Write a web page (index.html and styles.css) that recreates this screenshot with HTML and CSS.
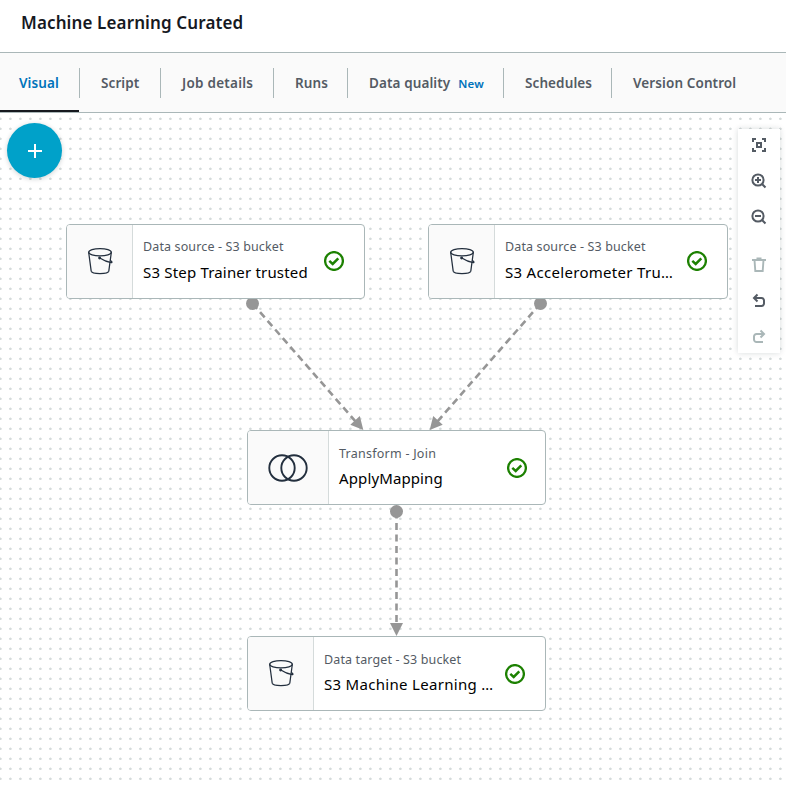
FILE: index.html
```html
<!DOCTYPE html>
<html lang="en">
<head>
<meta charset="utf-8">
<title>Machine Learning Curated</title>
<link rel="stylesheet" href="styles.css">
</head>
<body>
<svg class="defs" width="0" height="0">
  <symbol id="bucket" viewBox="0 0 28 30">
    <g fill="none" stroke="#232f3e" stroke-width="1.25" stroke-linejoin="round" stroke-linecap="round">
      <ellipse cx="13" cy="5.2" rx="11.3" ry="3.7"/>
      <path d="M1.700 5.500 4.200 24.200c.3 1.600 3.800 2.500 8.800 2.500s8.500-.9 8.800-2.500l2.500-18.700"/>
      <path d="M12.800 11.100c3 2 7.500 4 11.400 4.500 1.300 0 .8-1-.5-1.900"/>
      <circle cx="12.600" cy="11" r=".8" fill="#232f3e"/>
    </g>
  </symbol>
  <symbol id="check" viewBox="0 0 20 20">
    <circle cx="10" cy="10" r="8.900" fill="none" stroke="#1d8102" stroke-width="2.300"/>
    <path d="m5.300 9.800 3.400 3.100 5.600-5.600" fill="none" stroke="#1d8102" stroke-width="2.500"/>
  </symbol>
</svg>
<header class="header"><h1>Machine Learning Curated</h1></header>
<nav class="tabs">
  <a class="tab tab-visual active"><span>Visual</span></a>
  <a class="tab tab-script"><span>Script</span></a>
  <a class="tab tab-details"><span>Job details</span></a>
  <a class="tab tab-runs"><span>Runs</span></a>
  <a class="tab tab-quality"><span>Data quality</span><small>New</small></a>
  <a class="tab tab-schedules"><span>Schedules</span></a>
  <a class="tab tab-version"><span>Version Control</span></a>
</nav>
<main class="canvas">
  <svg class="edges" width="786" height="672" viewBox="0 113 786 672">
    <g fill="none" stroke="#969696" stroke-width="2.600" stroke-dasharray="7 4.500">
      <path d="M252.500 303.500 356 422"/>
      <path d="M540.500 303.500 437 422"/>
      <path d="M396.500 511.500V625"/>
    </g>
    <g fill="#969696">
      <circle cx="252.500" cy="303.500" r="6.500"/>
      <circle cx="540.500" cy="303.500" r="6.500"/>
      <circle cx="396.500" cy="511.500" r="6.500"/>
      <path d="M363.300 430 350.300 424.800 359.800 416z"/>
      <path d="M429.700 430 442.700 424.800 433.200 416z"/>
      <path d="M396.500 636 390 623h13z"/>
    </g>
  </svg>
  <section class="node trainer">
    <div class="node-icon"><svg width="28" height="30"><use href="#bucket"/></svg></div>
    <div class="node-text"><p class="kind">Data source - S3 bucket</p><p class="name">S3 Step Trainer trusted</p></div>
    <svg class="status" width="20" height="20"><use href="#check"/></svg>
  </section>
  <section class="node accelerometer">
    <div class="node-icon"><svg width="28" height="30"><use href="#bucket"/></svg></div>
    <div class="node-text"><p class="kind">Data source - S3 bucket</p><p class="name">S3 Accelerometer Tru…</p></div>
    <svg class="status" width="20" height="20"><use href="#check"/></svg>
  </section>
  <section class="node mapping">
    <div class="node-icon"><svg width="40" height="28" fill="none" stroke="#232f3e" stroke-width="1.900"><circle cx="14" cy="14" r="12.700"/><circle cx="26" cy="14" r="12.700"/></svg></div>
    <div class="node-text"><p class="kind">Transform - Join</p><p class="name">ApplyMapping</p></div>
    <svg class="status" width="20" height="20"><use href="#check"/></svg>
  </section>
  <section class="node target">
    <div class="node-icon"><svg width="28" height="30"><use href="#bucket"/></svg></div>
    <div class="node-text"><p class="kind">Data target - S3 bucket</p><p class="name">S3 Machine Learning …</p></div>
    <svg class="status" width="20" height="20"><use href="#check"/></svg>
  </section>
  <button class="add" aria-label="Add node"><svg width="14" height="14" stroke="#fff" stroke-width="2"><path d="M7 0v14M0 7h14"/></svg></button>
  <aside class="tools">
    <svg width="16" height="16"><path d="M2 5V2h3M11 2h3v3M14 11v3h-3M5 14H2v-3"/><path d="M6 6h4v4H6z"/></svg>
    <svg width="16" height="16"><circle cx="7" cy="7" r="5.600"/><path d="m11 11 3.500 3.500M4 7h6M7 4v6"/></svg>
    <svg width="16" height="16"><circle cx="7" cy="7" r="5.600"/><path d="m11 11 3.500 3.500M4 7h6"/></svg>
    <svg class="off trash" width="16" height="16"><path d="M1 3h14M5.500 1.500h5M3.500 3l.8 11h7.400l.8-11" stroke-width="1.900"/></svg>
    <svg width="16" height="16"><path d="M6.500 1.500 3 5l3.500 3.500M3 5h7.500a2.500 2.500 0 0 1 2.500 2.500v3a2.500 2.500 0 0 1-2.500 2.500H4"/></svg>
    <svg class="off" width="16" height="16"><path d="M9.500 1.500 13 5 9.500 8.500M13 5H5.500A2.500 2.500 0 0 0 3 7.500v3A2.500 2.500 0 0 0 5.500 13H12"/></svg>
  </aside>
</main>
</body>
</html>
```
FILE: styles.css
```css
* { box-sizing: border-box; }
body { margin: 0; width: 786px; height: 785px; overflow: hidden; background: #fff; font-family: "Noto Sans", sans-serif; color: #16191f; }
.defs { position: absolute; }
.header { height: 53px; border-bottom: 1px solid #aab7b8; padding: 10px 21px; }
h1 { margin: 0; font-size: 17px; line-height: 26px; font-weight: 600; letter-spacing: .12px; white-space: nowrap; }
.tabs { display: flex; height: 60px; background: #fafafa; border-bottom: 1px solid #aab7b8; }
.tab { position: relative; display: flex; align-items: center; padding-left: 21px; height: 59px; color: #545b64; font-size: 13.5px; font-weight: 600; letter-spacing: .1px; white-space: nowrap; }
.tab + .tab { background: linear-gradient(#aab7b8, #aab7b8) 0 15px / 1px 30px no-repeat; padding-left: 22px; }
.tab small { color: #0073bb; font-size: 11.5px; margin-left: 8px; padding-top: 1px; }
.tab-visual { width: 79px; padding-left: 19px; }
.active { color: #0073bb; border-bottom: 2px solid #16191f; padding-top: 2px; }
.tab-script { width: 81px; }
.tab-details { width: 113px; letter-spacing: .25px; }
.tab-runs { width: 74px; }
.tab-quality { width: 156px; }
.tab-schedules { width: 108px; }
.tab-version { width: 175px; }
.canvas { position: relative; height: 672px; background: radial-gradient(circle at 5.4px 5.8px, #d5dbdb 0.9px, transparent 1.6px) 5px 0 / 10px 10px; }
.edges { position: absolute; left: 0; top: 0; }
.node { position: absolute; display: flex; align-items: center; width: 299px; height: 75px; background: #fff; border: 1px solid #aab7b8; border-radius: 4px; overflow: hidden; }
.trainer { left: 66px; top: 111px; }
.accelerometer { left: 428px; top: 111px; width: 300px; }
.mapping { left: 247px; top: 317px; }
.target { left: 247px; top: 523px; }
.node-icon { flex: none; width: 66px; height: 100%; background: #fafafa; border-right: 1px solid #d5dbdb; display: flex; align-items: center; justify-content: center; padding-left: 2px; }
.mapping .node-icon { width: 81px; padding-left: 0; }
.node-text { flex: 1; padding-left: 10px; margin-top: -3px; white-space: nowrap; }
.node p { margin: 0; }
.node .kind { color: #545b64; font-size: 12.5px; line-height: 20px; letter-spacing: .13px; }
.node .name { color: #000; font-size: 15px; line-height: 24px; margin-top: 3px; letter-spacing: .18px; }
.accelerometer .name, .target .name { letter-spacing: .3px; }
.mapping .name { letter-spacing: .12px; margin-top: 2px; }
.mapping .kind { letter-spacing: .25px; }
.mapping .node-text { margin-top: -2px; }
.target .node-text { margin-top: -2px; }
.target .kind { line-height: 21px; }
.target .name { margin-top: 2px; }
.status { flex: none; margin-right: 20px; position: relative; top: -1px; }
.mapping .status { margin-right: 18px; }
.target .status, .mapping .status { top: 0; }
.add { position: absolute; left: 7px; top: 10px; width: 55px; height: 55px; border: 0; border-radius: 50%; padding: 0; background: #00a1c9; box-shadow: 0 1px 5px rgba(0, 28, 36, .2); display: flex; align-items: center; justify-content: center; }
.tools { position: absolute; left: 738px; top: 16px; width: 42px; height: 224px; background: #fff; box-shadow: 0 0 6px rgba(0, 28, 36, .16); display: flex; flex-direction: column; align-items: center; gap: 20px; padding-top: 8px; }
.tools svg { flex: none; fill: none; stroke: #545b64; stroke-width: 2; }
.tools .off { stroke: #aab7b8; }
.tools .trash { margin-top: 12px; }
```
